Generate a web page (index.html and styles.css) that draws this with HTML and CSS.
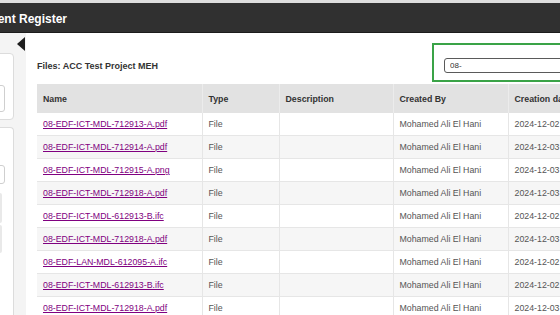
FILE: index.html
```html
<!doctype html>
<html lang="en">

<head>
    <meta charset="UTF-8">
    <title>Document Register</title>
    <link rel="stylesheet" href="styles.css">
</head>

<body>
    <div class="app">
        <header class="topbar">
            <h1 class="page-title">Document Register</h1>
        </header>

        <div class="workspace">
            <aside class="sidebar">
                <span class="collapse-toggle" title="Collapse"></span>
                <div class="card card-filter">
                    <div class="field field-tall"></div>
                </div>
                <div class="card card-options">
                    <div class="field"></div>
                    <div class="side-btn"></div>
                    <div class="side-btn short"></div>
                </div>
            </aside>

            <main class="content">
                <div class="content-inner">
                    <div class="content-head">
                        <h2 class="files-title">Files: ACC Test Project MEH</h2>
                        <div class="search-box">
                            <input type="text" class="search-input" value="08-">
                        </div>
                    </div>

                    <table class="file-table">
                        <colgroup>
                            <col class="col-name">
                            <col class="col-type">
                            <col class="col-desc">
                            <col class="col-user">
                            <col class="col-date">
                        </colgroup>
                        <thead>
                            <tr>
                                <th>Name</th>
                                <th>Type</th>
                                <th>Description</th>
                                <th>Created By</th>
                                <th>Creation date</th>
                            </tr>
                        </thead>
                        <tbody>
                            <tr>
                                <td><a href="#">08-EDF-ICT-MDL-712913-A.pdf</a></td>
                                <td>File</td>
                                <td></td>
                                <td>Mohamed Ali El Hani</td>
                                <td>2024-12-02</td>
                            </tr>
                            <tr>
                                <td><a href="#">08-EDF-ICT-MDL-712914-A.pdf</a></td>
                                <td>File</td>
                                <td></td>
                                <td>Mohamed Ali El Hani</td>
                                <td>2024-12-03</td>
                            </tr>
                            <tr>
                                <td><a href="#">08-EDF-ICT-MDL-712915-A.png</a></td>
                                <td>File</td>
                                <td></td>
                                <td>Mohamed Ali El Hani</td>
                                <td>2024-12-03</td>
                            </tr>
                            <tr>
                                <td><a href="#">08-EDF-ICT-MDL-712918-A.pdf</a></td>
                                <td>File</td>
                                <td></td>
                                <td>Mohamed Ali El Hani</td>
                                <td>2024-12-03</td>
                            </tr>
                            <tr>
                                <td><a href="#">08-EDF-ICT-MDL-612913-B.ifc</a></td>
                                <td>File</td>
                                <td></td>
                                <td>Mohamed Ali El Hani</td>
                                <td>2024-12-02</td>
                            </tr>
                            <tr>
                                <td><a href="#">08-EDF-ICT-MDL-712918-A.pdf</a></td>
                                <td>File</td>
                                <td></td>
                                <td>Mohamed Ali El Hani</td>
                                <td>2024-12-03</td>
                            </tr>
                            <tr>
                                <td><a href="#">08-EDF-LAN-MDL-612095-A.ifc</a></td>
                                <td>File</td>
                                <td></td>
                                <td>Mohamed Ali El Hani</td>
                                <td>2024-12-02</td>
                            </tr>
                            <tr>
                                <td><a href="#">08-EDF-ICT-MDL-612913-B.ifc</a></td>
                                <td>File</td>
                                <td></td>
                                <td>Mohamed Ali El Hani</td>
                                <td>2024-12-02</td>
                            </tr>
                            <tr>
                                <td><a href="#">08-EDF-ICT-MDL-712918-A.pdf</a></td>
                                <td>File</td>
                                <td></td>
                                <td>Mohamed Ali El Hani</td>
                                <td>2024-12-03</td>
                            </tr>
                        </tbody>
                    </table>
                </div>
            </main>
        </div>
    </div>
</body>

</html>
```

FILE: styles.css
```css
@charset "UTF-8";
*,
*:after,
*:before {
    box-sizing: border-box;
    padding: 0;
    margin: 0;
}

html,
body {
    height: 100%;
}

body {
    font-family: "Liberation Sans", Arial, sans-serif;
    background: #fff;
    color: #555;
    overflow: hidden;
}

.app {
    display: flex;
    flex-direction: column;
    height: 100%;
    border-top: 3px solid #dedede;
}

/* Top bar */

.topbar {
    height: 30px;
    background: #303030;
    border-bottom: 1px solid #1c1c1c;
    display: flex;
    align-items: center;
    overflow: hidden;
    flex-shrink: 0;
}

.page-title {
    font-size: 12px;
    font-weight: bold;
    color: #fff;
    white-space: nowrap;
    margin-left: -43px;
    margin-top: 2px;
}

/* Workspace */

.workspace {
    flex: 1;
    display: flex;
    min-height: 0;
}

.sidebar {
    position: relative;
    width: 26px;
    flex-shrink: 0;
    background: #f4f4f4;
    padding: 20px 12px 0 0;
    display: flex;
    flex-direction: column;
    gap: 7px;
}

.collapse-toggle {
    position: absolute;
    top: 4px;
    left: 17px;
    width: 0;
    height: 0;
    border-top: 7px solid transparent;
    border-bottom: 7px solid transparent;
    border-right: 8px solid #1e1e1e;
}

.card {
    margin-left: -30px;
    background: #fff;
    border: 1px solid #dcdcdc;
    border-radius: 4px;
    padding: 0 8px 0 0;
}

.card-filter {
    height: 67px;
    padding-top: 31px;
}

.card-options {
    flex: 1;
    padding-top: 37px;
    border-bottom: none;
    border-radius: 4px 4px 0 0;
}

.field {
    height: 19px;
    border: 1px solid #cfcfcf;
    border-radius: 3px;
    background: #fff;
}

.field-tall {
    height: 27px;
}

.side-btn {
    height: 30px;
    margin-top: 9px;
    margin-right: 3px;
    background: #e9e9e9;
    border-radius: 2px;
}

.side-btn.short {
    height: 28px;
    margin-top: 2px;
}

/* Main content */

.content {
    flex: 1;
    min-width: 0;
    padding-left: 11px;
    overflow: hidden;
}

.content-inner {
    width: 600px;
}

.content-head {
    display: flex;
    justify-content: space-between;
    padding-top: 10px;
    margin-bottom: 2px;
}

.files-title {
    font-size: 9px;
    font-weight: bold;
    color: #333;
    margin-top: 18px;
}

.search-box {
    width: 205px;
    height: 39px;
    border: 2px solid #3aa347;
    padding: 13px 0 0 10px;
}

.search-input {
    display: block;
    width: 200px;
    height: 15px;
    border: 1.5px solid #5a5a5a;
    border-radius: 3px;
    padding: 0 5px;
    font: 8px "Liberation Sans", Arial, sans-serif;
    color: #333;
    background: #fff;
    outline: none;
}

/* File table */

.file-table {
    width: 600px;
    table-layout: fixed;
    border-collapse: collapse;
    font-size: 8.8px;
}

.col-name {
    width: 165px;
}

.col-type {
    width: 77px;
}

.col-desc {
    width: 114px;
}

.col-user {
    width: 115px;
}

.col-date {
    width: 129px;
}

.file-table th {
    background: #e2e2e2;
    color: #333;
    font-weight: bold;
    text-align: left;
    line-height: 10px;
    padding: 10px 6px 9px;
    border-left: 1px solid #ececec;
}

.file-table th:first-child,
.file-table td:first-child {
    border-left: none;
}

.file-table td {
    line-height: 10px;
    padding: 6px 6px;
    border-bottom: 1px solid #e6e6e6;
    border-left: 1px solid #e6e6e6;
    white-space: nowrap;
    overflow: hidden;
}

.file-table tbody tr:nth-child(even) td {
    background: #f6f6f6;
}

.file-table a {
    color: #800080;
    text-decoration: underline;
}
```
